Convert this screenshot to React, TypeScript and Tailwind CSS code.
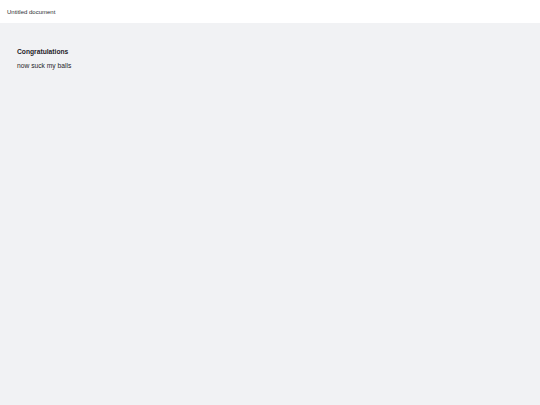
export default function App() {
  return (
    <div
      className="flex h-[405px] w-[540px] flex-col bg-[#f1f2f4] text-[#1f2328]"
      style={{ fontFamily: '"Liberation Sans", Arial, sans-serif' }}
    >
      <div className="flex h-[23px] items-center bg-white px-[7px] pt-[1px] text-[6px] leading-[8px] text-[#2b2f33]">
        Untitled document
      </div>
      <div className="flex flex-col px-[17px] pt-[24px]">
        <h1 className="text-[6.7px] font-bold leading-[9px]">Congratulations</h1>
        <p className="mt-[5px] text-[6.7px] leading-[9px]">now suck my balls</p>
      </div>
    </div>
  );
}
